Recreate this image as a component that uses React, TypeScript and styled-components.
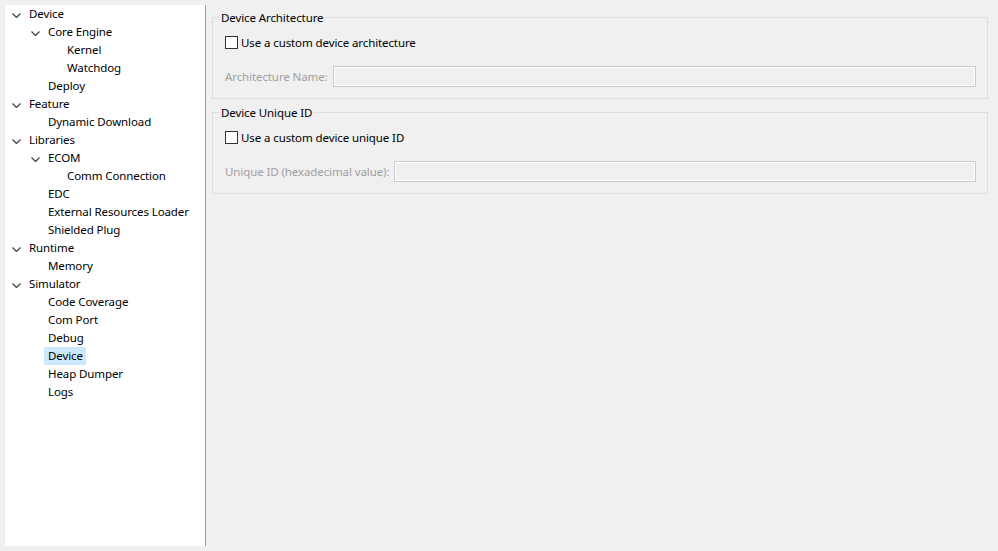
import React from "react";
import styled, { createGlobalStyle } from "styled-components";

const GlobalStyle = createGlobalStyle`
  html, body { margin: 0; padding: 0; background: #f0f0f0; }
  body { font-family: "Noto Sans", "Open Sans", sans-serif; font-size: 11.5px; letter-spacing: -0.1px; color: #000; }
  * { box-sizing: border-box; }
`;

const Page = styled.div`
  width: 998px;
  height: 551px;
  padding: 5px 0 5px 5px;
  display: flex;
  background: #f0f0f0;
  overflow: hidden;
`;

const TreePanel = styled.div`
  width: 201px;
  height: 541px;
  background: #fff;
  border-right: 1px solid #a0a0a0;
  display: flex;
  flex-direction: column;
`;

const Row = styled.div<{ $level: number }>`
  height: 18px;
  display: flex;
  align-items: center;
  padding-left: ${(p) => 3 + p.$level * 19}px;
  white-space: nowrap;
`;

const Toggle = styled.span`
  width: 17px;
  height: 18px;
  display: flex;
  align-items: center;
  flex: none;
  svg { margin-left: 4px; margin-top: 3px; }
`;

const Label = styled.span<{ $selected?: boolean }>`
  height: 18px;
  line-height: 18px;
  padding: 0 3px 0 4px;
  background: ${(p) => (p.$selected ? "#cce8ff" : "transparent")};
`;

const Content = styled.div`
  flex: 1;
  padding: 12px 10px 0 6px;
  display: flex;
  flex-direction: column;
  gap: 13px;
`;

const Group = styled.div`
  position: relative;
  border: 1px solid #dcdcdc;
  padding: 15px 11px 11px 12px;
  display: flex;
  flex-direction: column;
  gap: 15px;
`;

const Legend = styled.span`
  position: absolute;
  top: -9px;
  left: 6px;
  padding: 0 2px 0 2px;
  line-height: 18px;
  background: #f0f0f0;
`;

const CheckRow = styled.label`
  height: 18px;
  display: flex;
  align-items: center;
  gap: 3px;
`;

const Box = styled.span`
  width: 13px;
  height: 13px;
  border: 1px solid #333;
  background: #fff;
  flex: none;
`;

const FieldRow = styled.div`
  display: flex;
  align-items: center;
  gap: 5px;
`;

const FieldLabel = styled.span`
  color: #a0a0a0;
  white-space: nowrap;
`;

const Input = styled.div`
  flex: 1;
  height: 21px;
  border: 1px solid #cccccc;
  box-shadow: inset 0 0 0 1px #fff;
  background: #f0f0f0;
`;

const Chevron = () => (
  <svg width="9" height="5" viewBox="0 0 9 5">
    <polyline points="0.5,0.5 4.5,4.5 8.5,0.5" fill="none" stroke="#444" strokeWidth="1.3" />
  </svg>
);

type Node = { label: string; level: number; open?: boolean; selected?: boolean };

const nodes: Node[] = [
  { label: "Device", level: 0, open: true },
  { label: "Core Engine", level: 1, open: true },
  { label: "Kernel", level: 2 },
  { label: "Watchdog", level: 2 },
  { label: "Deploy", level: 1 },
  { label: "Feature", level: 0, open: true },
  { label: "Dynamic Download", level: 1 },
  { label: "Libraries", level: 0, open: true },
  { label: "ECOM", level: 1, open: true },
  { label: "Comm Connection", level: 2 },
  { label: "EDC", level: 1 },
  { label: "External Resources Loader", level: 1 },
  { label: "Shielded Plug", level: 1 },
  { label: "Runtime", level: 0, open: true },
  { label: "Memory", level: 1 },
  { label: "Simulator", level: 0, open: true },
  { label: "Code Coverage", level: 1 },
  { label: "Com Port", level: 1 },
  { label: "Debug", level: 1 },
  { label: "Device", level: 1, selected: true },
  { label: "Heap Dumper", level: 1 },
  { label: "Logs", level: 1 },
];

export default function App() {
  return (
    <>
      <GlobalStyle />
      <Page>
        <TreePanel>
          {nodes.map((n, i) => (
            <Row key={i} $level={n.level}>
              <Toggle>{n.open ? <Chevron /> : null}</Toggle>
              <Label $selected={n.selected}>{n.label}</Label>
            </Row>
          ))}
        </TreePanel>
        <Content>
          <Group>
            <Legend>Device Architecture</Legend>
            <CheckRow>
              <Box />
              Use a custom device architecture
            </CheckRow>
            <FieldRow>
              <FieldLabel>Architecture Name:</FieldLabel>
              <Input />
            </FieldRow>
          </Group>
          <Group>
            <Legend>Device Unique ID</Legend>
            <CheckRow>
              <Box />
              Use a custom device unique ID
            </CheckRow>
            <FieldRow>
              <FieldLabel>Unique ID (hexadecimal value):</FieldLabel>
              <Input />
            </FieldRow>
          </Group>
        </Content>
      </Page>
    </>
  );
}
